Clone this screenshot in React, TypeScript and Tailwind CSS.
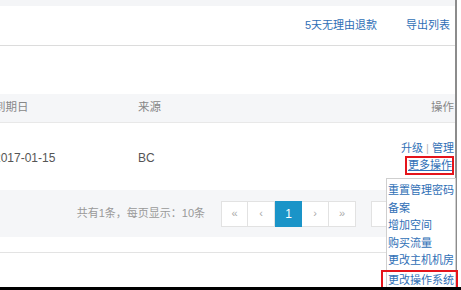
const ff = { fontFamily: '"Liberation Sans", "Noto Sans CJK SC", sans-serif' };

const menuItems = ['重置管理密码', '备案', '增加空间', '购买流量', '更改主机机房'];

export default function App() {
  return (
    <div className="relative h-[290px] w-[461px] overflow-hidden bg-white text-[12px] text-[#666]" style={ff}>
      <div className="flex h-full w-[457px] flex-col border-r-2 border-[#8c8c8c]">
        {/* top strip */}
        <div className="h-[6px] shrink-0 bg-[#f4f5f7]" />

        {/* toolbar */}
        <div className="flex h-[40px] shrink-0 items-center justify-end gap-[29px] border-b border-[#dcdcdc] pr-[5px] text-[11px] text-[#2f6fb6]">
          <a className="cursor-pointer">5天无理由退款</a>
          <a className="cursor-pointer">导出列表</a>
        </div>

        <div className="h-[48px] shrink-0" />

        {/* table */}
        <div className="-ml-[6px] flex flex-col">
          <div className="grid h-[29px] shrink-0 grid-cols-[144px_1fr_auto] items-center border-b border-[#e8e8e8] bg-[#f5f6f8] pr-[1px] text-[11.5px] text-[#888]">
            <span>到期日</span>
            <span>来源</span>
            <span>操作</span>
          </div>
          <div className="grid h-[67px] shrink-0 grid-cols-[144px_1fr_auto] items-center pr-[1px] text-[#555]">
            <span className="pt-[2px]">2017-01-15</span>
            <span className="pt-[2px]">BC</span>
            <div className="flex flex-col items-end pt-[3px] text-[11px] leading-[15px]">
              <div className="text-[#2f6fb6]">
                升级 <span className="text-[#bbb]">|</span> 管理
              </div>
              <div className="border-2 border-[#e5141b] pl-[1px] text-[#2f6fb6] underline">更多操作</div>
            </div>
          </div>
        </div>

        {/* pagination */}
        <div className="flex h-[47px] shrink-0 items-center justify-end bg-[#f5f6f8] pr-[34px]">
          <span className="mr-[16px] text-[11px] text-[#999]">共有1条，每页显示：10条</span>
          <div className="flex h-[26px]">
            {['«', '‹', '1', '›', '»'].map((p, i) => (
              <span
                key={i}
                className={
                  p === '1'
                    ? 'flex w-[27px] items-center justify-center border border-[#1a94c8] bg-[#1a94c8] text-white'
                    : 'flex w-[27px] items-center justify-center border border-l-0 border-[#e2e2e2] bg-white text-[11px] text-[#aaa] first:border-l'
                }
              >
                {p}
              </span>
            ))}
          </div>
          <div className="ml-[15px] h-[26px] w-[50px] border border-[#e2e2e2] bg-white" />
        </div>

        <div className="h-[16px] shrink-0 border-b border-[#e3e3e3]" />
      </div>

      {/* dropdown menu */}
      <div className="absolute left-[386px] top-[178px] flex h-[120px] w-[70px] flex-col border border-[#cfcfcf] bg-white pl-[1px] pt-[3px] text-[11px] leading-[17.6px] text-[#2f6fb6]">
        {menuItems.map((m) => (
          <span key={m} className="whitespace-nowrap">{m}</span>
        ))}
      </div>
      <div className="absolute left-[381px] top-[270px] h-[22px] w-[77px] whitespace-nowrap border-2 border-[#e5141b] pl-[5px] text-[11px] leading-[17px] text-[#2f6fb6]">
        更改操作系统
      </div>

      <div className="absolute bottom-0 left-0 h-[3px] w-full bg-black" />
    </div>
  );
}
